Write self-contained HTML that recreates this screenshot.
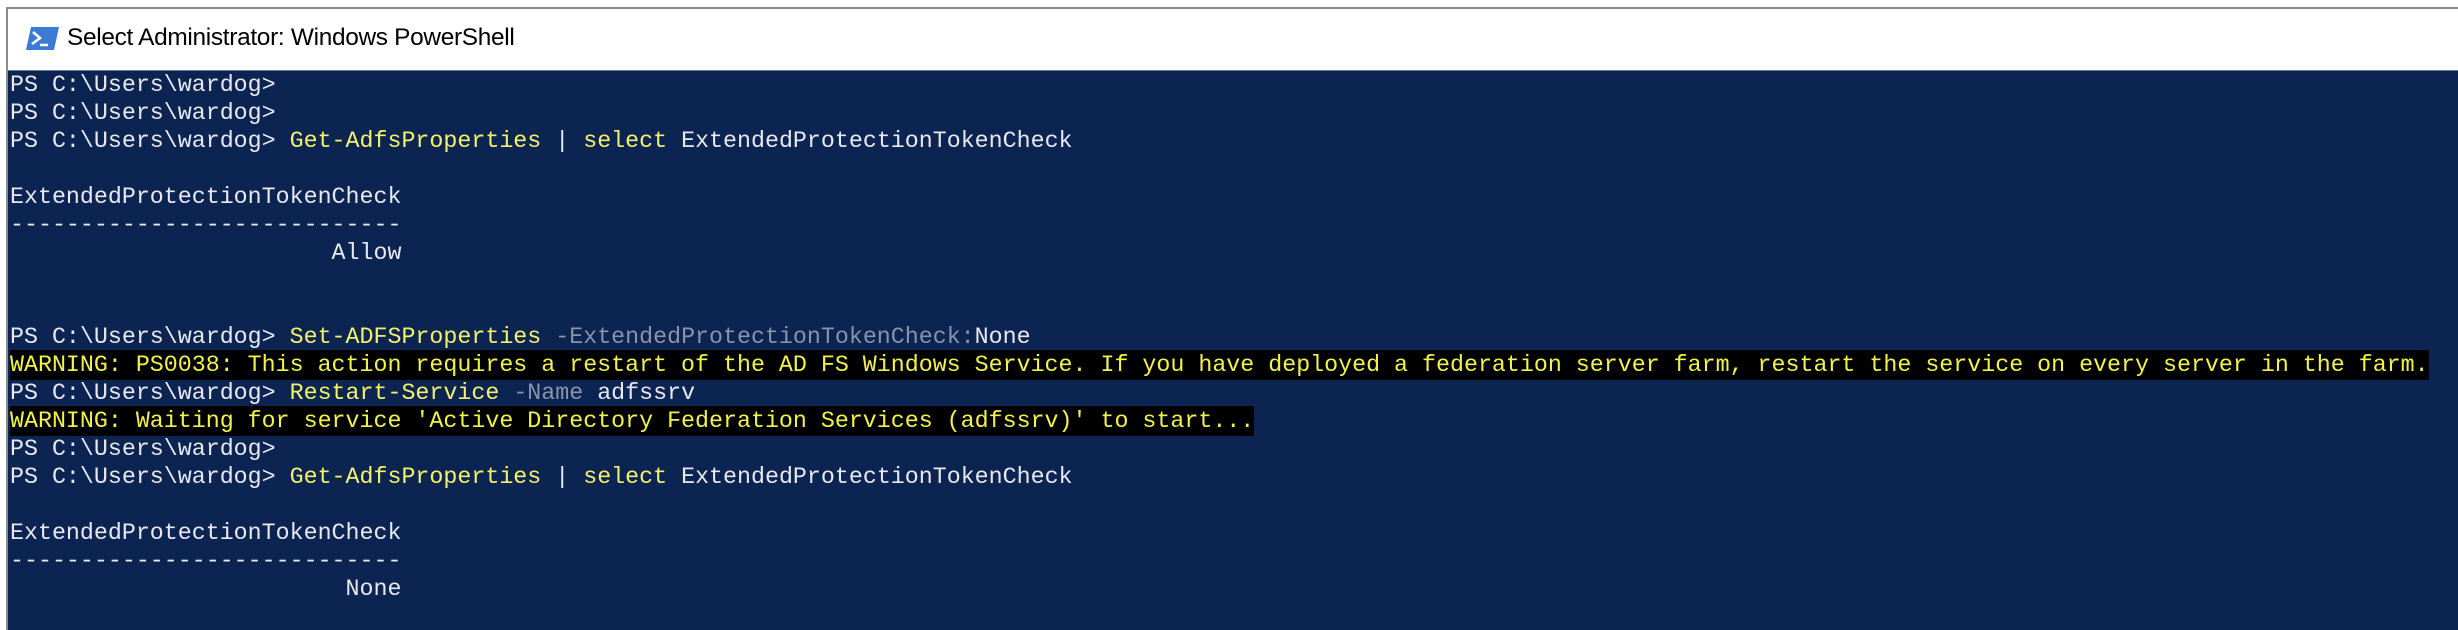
<!DOCTYPE html>
<html><head><meta charset="utf-8"><style>
html,body{margin:0;padding:0;background:#fff;width:2458px;height:630px;overflow:hidden}
.win{position:absolute;left:6px;top:7px;width:2452px;height:623px;border-top:2px solid #8a8a8a;border-left:2px solid #8a8a8a;box-sizing:border-box;background:#fff}
.title{position:absolute;left:0;top:0;right:0;height:59px;background:#fff}
.title span{position:absolute;left:59px;top:15px;font-family:"Liberation Sans",sans-serif;font-size:24.4px;color:#000;letter-spacing:-0.3px}
.icon{position:absolute;left:18px;top:18px}
.term{position:absolute;left:0;top:61px;right:0;bottom:0;background:#0c2452;border-top:1px solid #6a7a9a}
pre{margin:0;position:absolute;left:2px;top:0;font-family:"Liberation Mono",monospace;font-size:23.3px;line-height:28px;color:#e8e8ee}
.y{color:#f2f26a}.g{color:#8a93a8}.w{background:#000;color:#f2f24a;padding:2px 0}
</style></head><body>
<div class="win">
<div class="title">
<svg class="icon" width="33" height="23" viewBox="0 0 33 23"><polygon points="5,0 33,0 28,23 0,23" fill="#3a7bd5"/><path d="M7,5 L14,11 L6,17" stroke="#fff" stroke-width="2.5" fill="none"/><path d="M14,18 L22,18" stroke="#fff" stroke-width="2.5"/></svg>
<span>Select Administrator: Windows PowerShell</span>
</div>
<div class="term"><pre>PS C:\Users\wardog>
PS C:\Users\wardog>
PS C:\Users\wardog> <span class="y">Get-AdfsProperties</span> | <span class="y">select</span> ExtendedProtectionTokenCheck

ExtendedProtectionTokenCheck
----------------------------
                       Allow


PS C:\Users\wardog> <span class="y">Set-ADFSProperties</span> <span class="g">-ExtendedProtectionTokenCheck:</span>None
<span class="w">WARNING: PS0038: This action requires a restart of the AD FS Windows Service. If you have deployed a federation server farm, restart the service on every server in the farm.</span>
PS C:\Users\wardog> <span class="y">Restart-Service</span> <span class="g">-Name</span> adfssrv
<span class="w">WARNING: Waiting for service 'Active Directory Federation Services (adfssrv)' to start...</span>
PS C:\Users\wardog>
PS C:\Users\wardog> <span class="y">Get-AdfsProperties</span> | <span class="y">select</span> ExtendedProtectionTokenCheck

ExtendedProtectionTokenCheck
----------------------------
                        None
</pre></div>
</div>
</body></html>
